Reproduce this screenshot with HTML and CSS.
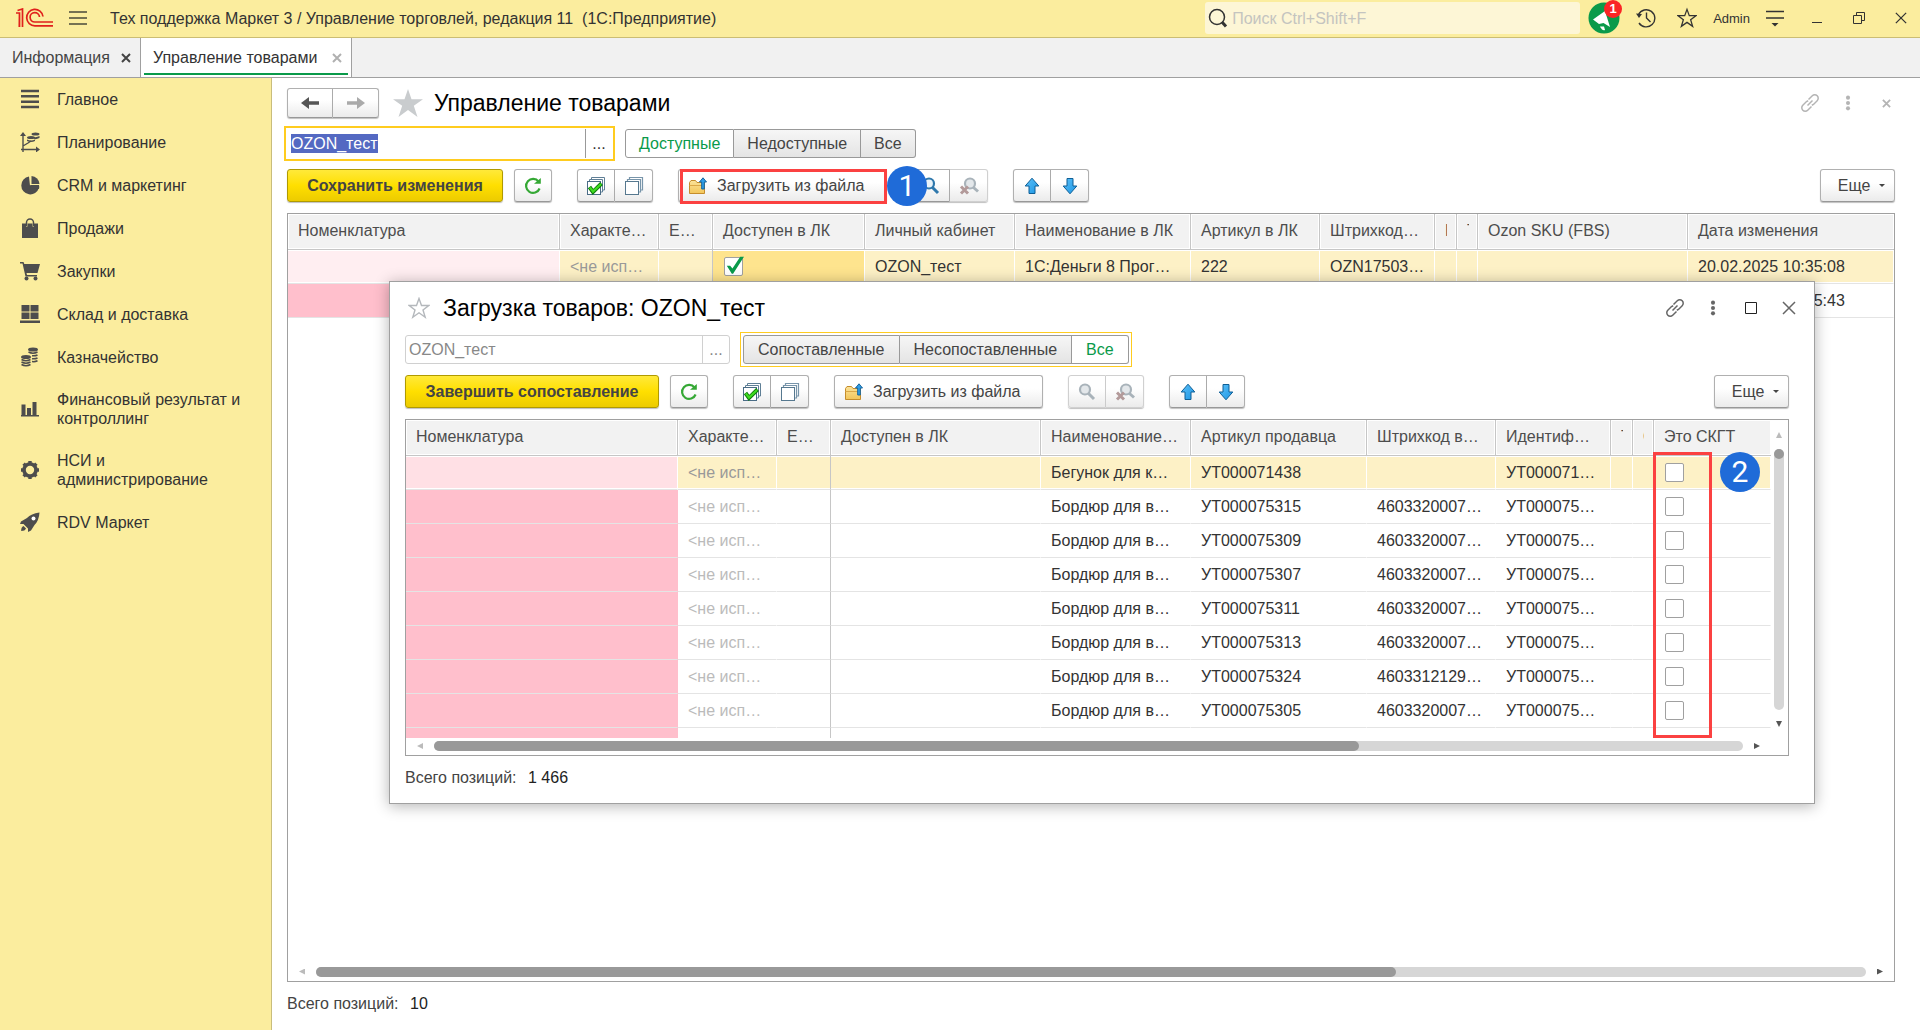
FILE: index.html
```html
<!DOCTYPE html>
<html lang="ru">
<head>
<meta charset="utf-8">
<title>Управление товарами</title>
<link rel="stylesheet" href="styles.css">
</head>
<body>
<svg class="sprite" aria-hidden="true">
  <defs>
    <linearGradient id="blue" x1="0" y1="0" x2="1" y2="1"><stop offset="0" stop-color="#5cc0f8"/><stop offset="1" stop-color="#1c96e4"/></linearGradient>
    <linearGradient id="folder" x1="0" y1="0" x2="0" y2="1"><stop offset="0" stop-color="#fbe39a"/><stop offset="1" stop-color="#f3c65a"/></linearGradient>
  </defs>
  <symbol id="i-refresh" viewBox="0 0 18 18"><path d="M14.6 4.6A7 7 0 1 0 15.6 11.5" fill="none" stroke="#35a835" stroke-width="2.2"/><path d="M10 6.8h6.800V1z" fill="#35a835"/></symbol>
  <symbol id="i-checkall" viewBox="0 0 20 20"><path d="M5.500 4V1.500h13V14H17M3.500 6V3.500h13V16H15" fill="#fff" stroke="#5f7f96"/><rect x="1.500" y="5.500" width="13" height="13" fill="#fff" stroke="#4a6c86"/><path d="M3.500 11l3.500 5 8.500-8.500" fill="none" stroke="#0d7a0d" stroke-width="4"/><path d="M3.800 11.300L7 15.500l8-7.500" fill="none" stroke="#3fdc1f" stroke-width="2.200"/></symbol>
  <symbol id="i-uncheckall" viewBox="0 0 20 20"><path d="M5.500 4V1.500h13V14H17M3.500 6V3.500h13V16H15" fill="#fff" stroke="#7895aa" stroke-width="1.200"/><rect x="1.500" y="5.500" width="13" height="13" fill="#fff" stroke="#56788f"/></symbol>
  <symbol id="i-folder" viewBox="0 0 18 18"><path d="M.5 16.500V5.500L2 3.500h4.500L8 5.500h7.500v11z" fill="url(#folder)" stroke="#c58d2c"/><path d="M.5 8.500h15" stroke="#dba848"/><path d="M14 .8l3.500 4.200h-2.200v7h-2.600V5h-2.200z" fill="#2f9ee8" stroke="#17649c"/></symbol>
  <symbol id="i-find" viewBox="0 0 18 18"><circle cx="7" cy="6.500" r="5" fill="#e9f3fa" stroke="#2f78ac" stroke-width="2.200"/><path d="M10.500 10.500l5.500 5.500" stroke="#2f78ac" stroke-width="3"/></symbol>
  <symbol id="i-findoff" viewBox="0 0 18 18"><circle cx="7" cy="6.500" r="5" fill="#e3e7ea" stroke="#a9b3ba" stroke-width="2.200"/><path d="M10.500 10.500l5.500 5.500" stroke="#a9b3ba" stroke-width="3"/></symbol>
  <symbol id="i-findclear" viewBox="0 0 20 18"><circle cx="11" cy="6.500" r="5" fill="#e3e7ea" stroke="#a9b3ba" stroke-width="2.200"/><path d="M14.500 10.500l4.500 4" stroke="#a9b3ba" stroke-width="3"/><path d="M2 9.500l7 7M9 9.500l-7 7" stroke="#b39a9a" stroke-width="3"/></symbol>
  <symbol id="i-up" viewBox="0 0 16 18"><path d="M8 1.200L14.800 9H11v7.500H5V9H1.200z" fill="url(#blue)" stroke="#0f5f96" stroke-linejoin="round"/></symbol>
  <symbol id="i-down" viewBox="0 0 16 18"><path d="M8 16.800L14.800 9H11V1.500H5V9H1.200z" fill="url(#blue)" stroke="#0f5f96" stroke-linejoin="round"/></symbol>
  <symbol id="i-star" viewBox="0 0 22 22"><path d="M11 1.500l2.500 7h7.300l-5.800 4.400 2.200 7.300L11 15.800l-6.200 4.400L7 12.900 1.200 8.500h7.300z" fill="none" stroke="currentColor" stroke-width="1.400"/></symbol>
  <symbol id="i-link" viewBox="0 0 20 20"><path d="M8.500 6.500l3.800-3.700a3.400 3.400 0 0 1 4.900 4.900l-3.700 3.800-1.700.8M11.500 13.500l-3.800 3.700a3.400 3.400 0 0 1-4.900-4.900l3.700-3.800 1.700-.8M7.500 12.500l5-5" fill="none" stroke="currentColor" stroke-width="1.500"/></symbol>
  <symbol id="i-dots" viewBox="0 0 6 18"><circle cx="3" cy="3" r="2.300" fill="currentColor"/><circle cx="3" cy="9" r="2.300" fill="currentColor"/><circle cx="3" cy="15" r="2.300" fill="currentColor"/></symbol>
  <symbol id="i-x" viewBox="0 0 14 14"><path d="M1 1l12 12M13 1L1 13" fill="none" stroke="currentColor" stroke-width="1.500"/></symbol>
  <symbol id="i-xs" viewBox="0 0 10 10"><path d="M1 1l8 8M9 1L1 9" fill="none" stroke="currentColor" stroke-width="2"/></symbol>
</svg>

<header class="topbar">
  <svg class="logo" viewBox="0 0 38 20" role="img" aria-label="1С"><g fill="none" stroke="#e0201c" stroke-width="1.700"><path d="M0 5h3.500V19M1.500 2.500L6.500 1V19M3.500 5l-.2 14"/><path d="M27 8.500A8.200 8.200 0 1 0 19 17.800H37"/><path d="M23.500 9A4.700 4.700 0 1 0 19 14H37"/></g></svg>
  <button class="bare" aria-label="Меню"><svg width="18" height="16" viewBox="0 0 18 16"><path d="M0 2h18M0 8h18M0 14h18" stroke="#4a4a3a" stroke-width="1.500"/></svg></button>
  <h1 class="apptitle">Тех поддержка Маркет 3 / Управление торговлей, редакция 11&nbsp; (1С:Предприятие)</h1>
  <label class="search">
    <svg width="20" height="20" viewBox="0 0 20 20"><circle cx="9" cy="9" r="7.500" fill="none" stroke="#333" stroke-width="1.500"/><path d="M14 14l4 4.500" stroke="#333" stroke-width="3"/></svg>
    <input type="search" placeholder="Поиск Ctrl+Shift+F" aria-label="Поиск">
  </label>
  <button class="bare notify" aria-label="Уведомления"><svg width="32" height="32" viewBox="0 0 32 32"><circle cx="16" cy="16" r="15.500" fill="#0a9a4a"/><path d="M5 17.500L17 9l5 16-6.500-4-4.500 1z" fill="#fff"/><path d="M12 24.500q2 4.500 5 3.500l-1-3.500z" fill="#fff"/></svg><span class="badge">1</span></button>
  <button class="bare" aria-label="История"><svg width="20" height="20" viewBox="0 0 20 20"><path d="M2.500 6.500A8.600 8.600 0 1 1 3 15M10.500 4.500V10l4 4" fill="none" stroke="#333" stroke-width="1.400"/><path d="M0 5.500l6 .5-3 4z" fill="#333"/></svg></button>
  <button class="bare" aria-label="Избранное"><svg width="20" height="22"><use href="#i-star"/></svg></button>
  <a class="user" href="#">Admin</a>
  <button class="bare" aria-label="Сервис"><svg width="18" height="18" viewBox="0 0 18 18"><path d="M0 2.500h18M0 9h18" stroke="#333" stroke-width="1.400"/><path d="M5.500 14h7L9 17.500z" fill="#333"/></svg></button>
  <div class="winctl">
    <button class="bare" aria-label="Свернуть"><svg width="12" height="14" viewBox="0 0 12 14"><path d="M1 11.500h10" stroke="#333"/></svg></button>
    <button class="bare" aria-label="Восстановить"><svg width="12" height="12" viewBox="0 0 12 12"><path d="M.5 3.500h8v8h-8zM3.500 3.500v-3h8v8h-3" fill="none" stroke="#333"/></svg></button>
    <button class="bare" aria-label="Закрыть"><svg width="12" height="12"><use href="#i-x"/></svg></button>
  </div>
</header>

<nav class="tabs" aria-label="Открытые окна">
  <div class="tab"><a href="#">Информация</a><button class="bare" aria-label="Закрыть вкладку"><svg width="10" height="10"><use href="#i-xs"/></svg></button></div>
  <div class="tab tab-active"><a href="#">Управление товарами</a><button class="bare" aria-label="Закрыть вкладку"><svg width="10" height="10"><use href="#i-xs"/></svg></button></div>
</nav>

<div class="workspace">
  <nav class="sidebar" aria-label="Разделы">
    <a href="#"><svg viewBox="0 0 20 20"><path d="M1 2h18M1 7.300h18M1 12.700h18M1 18h18" stroke="#4d4d4d" stroke-width="2.600"/></svg>Главное</a>
    <a href="#"><svg viewBox="0 0 20 20"><g stroke="#4d4d4d" fill="none" stroke-width="1.400"><path d="M3 20V3M1 17.500h16M3 14l5-3 3-2"/></g><path d="M0 4l3-4 3 4zM16 14.500l4 3-4 3z" fill="#4d4d4d"/><g fill="#4d4d4d"><ellipse cx="11" cy="5.500" rx="4" ry="1.600"/><ellipse cx="15.500" cy="2" rx="4" ry="1.600"/><path d="M7 7.500q4 2 8 0v1.500q-4 2-8 0zM12 4.500q4 1.500 7.500-.5V6q-3 1.500-5 1z"/></g></svg>Планирование</a>
    <a href="#"><svg viewBox="0 0 20 20"><path d="M9 1.500A9 9 0 1 0 18.900 13L10 10.800z" fill="#4d4d4d"/><path d="M11.500 1A8.500 8.500 0 0 1 19.500 9h-8z" fill="#4d4d4d"/><path d="M10 10h9q.5 2 0 4l-8-1z" fill="#4d4d4d"/></svg>CRM и маркетинг</a>
    <a href="#"><svg viewBox="0 0 20 20"><path d="M2 5.500h4v3h1.500v-3h5v3H14v-3h4V20H2z" fill="#4d4d4d"/><path d="M6.500 8V4.500a3.500 3.500 0 0 1 7 0V8" fill="none" stroke="#4d4d4d" stroke-width="1.500"/></svg>Продажи</a>
    <a href="#"><svg viewBox="0 0 20 20"><path d="M0 1h3.500l.8 2H20l-2.500 9H6.500l.5 2h10v1.500H5.500L2.500 2.500H0z" fill="#4d4d4d"/><circle cx="6.500" cy="17.500" r="2" fill="#4d4d4d"/><circle cx="15.500" cy="17.500" r="2" fill="#4d4d4d"/></svg>Закупки</a>
    <a href="#"><svg viewBox="0 0 20 20"><path d="M1.500 1H9.500v6.500h-8zM10.500 1h8v6.500h-8zM1.500 8.500h8V15h-8zM10.500 8.500h8V15h-8zM0 16.500h20V19H0z" fill="#4d4d4d"/></svg>Склад и доставка</a>
    <a href="#"><svg viewBox="0 0 20 20"><g fill="#4d4d4d"><ellipse cx="13" cy="2.500" rx="5" ry="2"/><ellipse cx="6" cy="10" rx="5" ry="2"/></g><g fill="none" stroke="#4d4d4d" stroke-width="1.500"><path d="M8.500 5q4.500 2.500 9 0M12 8.700q3 .5 5.500-.7M12 11.700q3 .5 5.500-.7M12 14.500q3 .5 5.500-.7M1.500 12.500q4.500 2.500 9 0M1.500 15q4.500 2.500 9 0M1.500 17.500q4.500 2.500 9 0"/></g></svg>Казначейство</a>
    <a href="#"><svg viewBox="0 0 20 20"><path d="M1.500 5.500H5.500V16H7V9h4v7h1.500V3h4v13H19v1.500H1V16h.5z" fill="#4d4d4d"/></svg>Финансовый результат и контроллинг</a>
    <a href="#"><svg viewBox="0 0 20 20"><circle cx="10" cy="10" r="6" fill="none" stroke="#4d4d4d" stroke-width="3.600"/><path d="M10 1v3M10 16v3M1 10h3M16 10h3M3.600 3.600l2 2M14.400 14.400l2 2M3.600 16.400l2-2M14.400 5.600l2-2" stroke="#4d4d4d" stroke-width="3.400"/></svg><span>НСИ и<br>администрирование</span></a>
    <a href="#"><svg viewBox="0 0 20 20"><path d="M19.500.5Q11 1.500 7 6L1 9.500 0 12h3.500L8 16.500V20l3-1.500L14.500 13q4.500-4.500 5-12.500z" fill="#4d4d4d"/><circle cx="13.500" cy="6.500" r="2" fill="#fff"/><path d="M3.500 14Q1 15 1.200 19 5 19 6 16.500z" fill="#4d4d4d"/></svg>RDV Маркет</a>
  </nav>

  <main class="form page">
    <div class="titlerow">
      <div class="group nav"><button class="btn" aria-label="Назад"><svg width="18" height="12" viewBox="0 0 18 12"><path d="M0 6l8-6v4.300h10v3.400H8V12z" fill="#555"/></svg></button><button class="btn" aria-label="Вперед"><svg width="18" height="12" viewBox="0 0 18 12"><path d="M18 6l-8-6v4.300H0v3.400h10V12z" fill="#aaa"/></svg></button></div>
      <button class="bare fav" aria-label="В избранное"><svg width="30" height="28" viewBox="0 0 30 28"><path d="M15 0l3.500 10.300H30l-9.200 6.500L24.500 28 15 21 5.500 28l3.700-11.200L0 10.300h11.500z" fill="#c9ccce"/></svg></button>
      <h2>Управление товарами</h2>
      <div class="formctl muted">
        <button class="bare" aria-label="Ссылка"><svg width="20" height="20"><use href="#i-link"/></svg></button>
        <button class="bare" aria-label="Действия"><svg width="6" height="16"><use href="#i-dots"/></svg></button>
        <button class="bare" aria-label="Закрыть форму"><svg width="9" height="9"><use href="#i-xs"/></svg></button>
      </div>
    </div>
    <div class="filterrow">
      <div class="field field-focus"><input type="text" value="OZON_тест" id="account" aria-label="Личный кабинет"><button aria-label="Выбрать">...</button></div>
      <div class="group toggle"><button class="btn on">Доступные</button><button class="btn">Недоступные</button><button class="btn">Все</button></div>
    </div>
    <div class="cmdrow">
      <button class="btn primary">Сохранить изменения</button>
      <button class="btn icon refresh" aria-label="Обновить"><svg width="18" height="18"><use href="#i-refresh"/></svg></button>
      <div class="group"><button class="btn icon" aria-label="Отметить все"><svg width="20" height="20"><use href="#i-checkall"/></svg></button><button class="btn icon" aria-label="Снять отметки"><svg width="20" height="20"><use href="#i-uncheckall"/></svg></button></div>
      <div class="callout">
        <button class="btn load"><svg width="18" height="18"><use href="#i-folder"/></svg>Загрузить из файла</button>
        <span class="frame frame-load"></span><span class="step step-one">1</span>
      </div>
      <div class="group"><button class="btn icon" aria-label="Найти"><svg width="18" height="18"><use href="#i-find"/></svg></button><button class="btn icon dim" aria-label="Отменить поиск"><svg width="20" height="18"><use href="#i-findclear"/></svg></button></div>
      <div class="group"><button class="btn icon" aria-label="Вверх"><svg width="16" height="18"><use href="#i-up"/></svg></button><button class="btn icon" aria-label="Вниз"><svg width="16" height="18"><use href="#i-down"/></svg></button></div>
      <button class="btn more">Еще<span class="caret"></span></button>
    </div>
    <div class="grid grid-page">
      <div class="rows">
        <table>
          <colgroup><col class="w272"><col class="w99"><col class="w54"><col class="w152"><col class="w150"><col class="w176"><col class="w129"><col class="w115"><col class="w22"><col class="w21"><col class="w210"><col></colgroup>
          <thead><tr><th>Номенклатура</th><th>Характе…</th><th>Е…</th><th>Доступен в ЛК</th><th>Личный кабинет</th><th>Наименование в ЛК</th><th>Артикул в ЛК</th><th>Штрихкод…</th><th><span class="sliver">Н</span></th><th><span class="sliver">Т</span></th><th>Ozon SKU (FBS)</th><th>Дата изменения</th></tr></thead>
          <tbody>
            <tr class="sel"><td class="pink-light"></td><td class="na">&lt;не исп…</td><td class="fixed"></td><td class="cur"><input type="checkbox" checked aria-label="Доступен в ЛК"></td><td>OZON_тест</td><td>1С:Деньги 8 Прог…</td><td>222</td><td>OZN17503…</td><td></td><td></td><td></td><td>20.02.2025 10:35:08</td></tr>
            <tr><td class="pink"></td><td></td><td class="fixed"></td><td></td><td></td><td></td><td></td><td></td><td></td><td></td><td></td><td>20.02.2025 10:55:43</td></tr>
          </tbody>
        </table>
      </div>
      <div class="hscroll"><span class="arr left off"></span><div class="track"><div class="thumb" style="width:69.7%"></div></div><span class="arr right"></span></div>
    </div>
    <p class="total">Всего позиций: <b>10</b></p>

    <section class="form dialog" role="dialog" aria-label="Загрузка товаров">
      <div class="titlerow">
        <button class="bare fav" aria-label="В избранное"><svg width="22" height="22"><use href="#i-star"/></svg></button>
        <h2>Загрузка товаров: OZON_тест</h2>
        <div class="formctl">
          <button class="bare" aria-label="Ссылка"><svg width="20" height="20"><use href="#i-link"/></svg></button>
          <button class="bare" aria-label="Действия"><svg width="6" height="16"><use href="#i-dots"/></svg></button>
          <button class="bare" aria-label="Развернуть"><svg width="12" height="12" viewBox="0 0 12 12"><path d="M.5 .5h11v11H.5z" fill="none" stroke="#222"/></svg></button>
          <button class="bare" aria-label="Закрыть"><svg width="14" height="14"><use href="#i-x"/></svg></button>
        </div>
      </div>
      <div class="filterrow">
        <div class="field field-off"><input type="text" value="OZON_тест" disabled aria-label="Личный кабинет"><button disabled aria-label="Выбрать">...</button></div>
        <div class="group toggle toggle-focus"><button class="btn">Сопоставленные</button><button class="btn">Несопоставленные</button><button class="btn on">Все</button></div>
      </div>
      <div class="cmdrow">
        <button class="btn primary wide">Завершить сопоставление</button>
        <button class="btn icon refresh" aria-label="Обновить"><svg width="18" height="18"><use href="#i-refresh"/></svg></button>
        <div class="group"><button class="btn icon" aria-label="Отметить все"><svg width="20" height="20"><use href="#i-checkall"/></svg></button><button class="btn icon" aria-label="Снять отметки"><svg width="20" height="20"><use href="#i-uncheckall"/></svg></button></div>
        <button class="btn load"><svg width="18" height="18"><use href="#i-folder"/></svg>Загрузить из файла</button>
        <div class="group"><button class="btn icon dim" aria-label="Найти"><svg width="18" height="18"><use href="#i-findoff"/></svg></button><button class="btn icon dim" aria-label="Отменить поиск"><svg width="20" height="18"><use href="#i-findclear"/></svg></button></div>
        <div class="group"><button class="btn icon" aria-label="Вверх"><svg width="16" height="18"><use href="#i-up"/></svg></button><button class="btn icon" aria-label="Вниз"><svg width="16" height="18"><use href="#i-down"/></svg></button></div>
        <button class="btn more">Еще<span class="caret"></span></button>
      </div>
      <div class="grid grid-dialog">
        <div class="rows">
          <table>
            <colgroup><col class="w272"><col class="w99"><col class="w54"><col class="w210"><col class="w150"><col class="w176"><col class="w129"><col class="w115"><col class="w22"><col class="w21"><col></colgroup>
            <thead><tr><th>Номенклатура</th><th>Характе…</th><th>Е…</th><th>Доступен в ЛК</th><th>Наименование…</th><th>Артикул продавца</th><th>Штрихкод в…</th><th>Идентиф…</th><th><span class="sliver">Т</span></th><th><span class="sliver thin">О</span></th><th>Это СКГТ</th></tr></thead>
            <tbody>
              <tr class="sel"><td class="pink-mid"></td><td class="na">&lt;не исп…</td><td class="fixed"></td><td></td><td>Бегунок для к…</td><td>УТ000071438</td><td></td><td>УТ000071…</td><td></td><td></td><td><input type="checkbox" aria-label="Это СКГТ"></td></tr>
              <tr><td class="pink"></td><td class="na">&lt;не исп…</td><td class="fixed"></td><td></td><td>Бордюр для в…</td><td>УТ000075315</td><td>4603320007…</td><td>УТ000075…</td><td></td><td></td><td><input type="checkbox" aria-label="Это СКГТ"></td></tr>
              <tr><td class="pink"></td><td class="na">&lt;не исп…</td><td class="fixed"></td><td></td><td>Бордюр для в…</td><td>УТ000075309</td><td>4603320007…</td><td>УТ000075…</td><td></td><td></td><td><input type="checkbox" aria-label="Это СКГТ"></td></tr>
              <tr><td class="pink"></td><td class="na">&lt;не исп…</td><td class="fixed"></td><td></td><td>Бордюр для в…</td><td>УТ000075307</td><td>4603320007…</td><td>УТ000075…</td><td></td><td></td><td><input type="checkbox" aria-label="Это СКГТ"></td></tr>
              <tr><td class="pink"></td><td class="na">&lt;не исп…</td><td class="fixed"></td><td></td><td>Бордюр для в…</td><td>УТ000075311</td><td>4603320007…</td><td>УТ000075…</td><td></td><td></td><td><input type="checkbox" aria-label="Это СКГТ"></td></tr>
              <tr><td class="pink"></td><td class="na">&lt;не исп…</td><td class="fixed"></td><td></td><td>Бордюр для в…</td><td>УТ000075313</td><td>4603320007…</td><td>УТ000075…</td><td></td><td></td><td><input type="checkbox" aria-label="Это СКГТ"></td></tr>
              <tr><td class="pink"></td><td class="na">&lt;не исп…</td><td class="fixed"></td><td></td><td>Бордюр для в…</td><td>УТ000075324</td><td>4603312129…</td><td>УТ000075…</td><td></td><td></td><td><input type="checkbox" aria-label="Это СКГТ"></td></tr>
              <tr><td class="pink"></td><td class="na">&lt;не исп…</td><td class="fixed"></td><td></td><td>Бордюр для в…</td><td>УТ000075305</td><td>4603320007…</td><td>УТ000075…</td><td></td><td></td><td><input type="checkbox" aria-label="Это СКГТ"></td></tr>
              <tr><td class="pink"></td><td></td><td class="fixed"></td><td></td><td></td><td></td><td></td><td></td><td></td><td></td><td></td></tr>
            </tbody>
          </table>
        </div>
        <div class="vscroll"><span class="arr up off"></span><div class="track"><div class="thumb"></div></div><span class="arr down"></span></div>
        <div class="hscroll"><span class="arr left off"></span><div class="track"><div class="thumb" style="width:70.7%"></div></div><span class="arr right"></span></div>
        <span class="frame frame-column"></span><span class="step step-two">2</span>
      </div>
      <p class="total">Всего позиций: <b>1 466</b></p>
    </section>
  </main>
</div>
<script src="app.js"></script>
</body>
</html>
```
FILE: styles.css
```css
* { box-sizing: border-box; }
html, body { height: 100%; }
body {
  margin: 0;
  display: flex;
  flex-direction: column;
  min-height: 100vh;
  font: 16px/19px "Liberation Sans", Arial, sans-serif;
  color: #333;
  background: #fff;
}
button, input { font: inherit; color: inherit; }
a { color: inherit; text-decoration: none; }
h1, h2, p { margin: 0; font-weight: 400; }
svg { display: block; flex: none; }
.sprite { position: absolute; width: 0; height: 0; }
.bare { display: flex; align-items: center; justify-content: center; padding: 0; border: 0; background: none; }

/* top bar */
.topbar {
  display: flex;
  align-items: center;
  flex: none;
  height: 38px;
  padding: 0 13px 1px 16px;
  background: #fbed9e;
  border-bottom: 1px solid #cbbd74;
}
.logo { width: 38px; height: 20px; margin-right: 15px; }
.apptitle { margin-left: 23px; font-size: 16px; flex: 1; white-space: nowrap; }
.search {
  display: flex;
  align-items: center;
  gap: 4px;
  width: 375px;
  height: 32px;
  padding-left: 3px;
  margin-right: 8px;
  border-radius: 3px;
  background: #fdf6d6;
}
.search input { flex: 1; min-width: 0; padding: 0; border: 0; background: none; outline: 0; }
.search input::placeholder { color: #c4c4c0; opacity: 1; }
.notify { position: relative; margin-right: 16px; }
.badge {
  position: absolute;
  top: -2px;
  right: -2px;
  width: 18px;
  height: 18px;
  border-radius: 50%;
  background: #fa2525;
  color: #fff;
  font: bold 13px/18px "Liberation Sans", Arial, sans-serif;
}
.notify ~ .bare { margin-right: 21px; }
.user { margin: 0 16px 0 -5px; font-size: 13px; }
.winctl { display: flex; align-items: center; gap: 30px; margin-left: 6px; }

/* open window tabs */
.tabs { display: flex; flex: none; height: 40px; background: #f1f1f1; border-bottom: 1px solid #a0a0a0; }
.tab { display: flex; align-items: center; justify-content: space-between; width: 141px; padding: 0 9px 0 12px; border-right: 1px solid #a0a0a0; color: #444; }
.tab-active { position: relative; width: 211px; background: #fff; color: #333; }
.tab-active::after { content: ""; position: absolute; left: 3px; right: 3px; bottom: 2px; height: 2px; background: #0a9a4a; }
.tab-active .bare { color: #b0b0b0; }

/* sections */
.workspace { display: flex; flex: 1; min-height: 0; }
.sidebar { flex: none; width: 272px; background: #fbed9e; border-right: 1px solid #c9bd7c; }
.sidebar a { display: flex; align-items: center; gap: 17px; min-height: 43px; padding: 11px 12px 12px 20px; }
.sidebar svg { width: 20px; height: 20px; margin: -1px 0; }

/* forms */
.form { display: flex; flex-direction: column; gap: 11px; }
.page { position: relative; flex: 1; min-width: 0; padding: 10px 25px 15px 15px; }
.titlerow, .filterrow, .cmdrow { display: flex; align-items: center; }
.titlerow { height: 30px; }
.titlerow h2 { flex: 1; color: #000; font-size: 23px; line-height: 26px; }
.page .fav { margin: 0 11px 0 14px; }
.formctl { display: flex; align-items: center; margin-right: -19px; color: #666; }
.formctl .bare { width: 38px; }
.formctl.muted { color: #b4b4b4; margin-right: -10px; }
.filterrow { gap: 13px; height: 29px; }

.btn {
  display: flex;
  align-items: center;
  justify-content: center;
  height: 33px;
  padding: 0;
  border: 1px solid #b0b0b0;
  border-bottom-color: #989898;
  border-radius: 3px;
  background: linear-gradient(#fff 40%, #ebebeb);
  box-shadow: 0 1px 1px rgba(0, 0, 0, .25);
  color: #444;
  white-space: nowrap;
}
.icon { width: 38px; }
.dim { border-color: #d0d0d0; }
.group { display: flex; }
.group .btn { border-radius: 0; }
.group .btn:first-child { border-radius: 3px 0 0 3px; }
.group .btn:last-child { border-radius: 0 3px 3px 0; }
.group .btn + .btn { border-left: 0; }
.nav .btn { width: 46px; height: 30px; }
.toggle .btn { height: 29px; padding: 0 13px; border-color: #999; box-shadow: none; background: linear-gradient(#f6f6f6, #e4e4e4); }
.toggle .btn.on { color: #0a9a4a; background: #fff; }
.toggle-focus { outline: 1px solid #ffcc1f; outline-offset: 2px; }
.toggle-focus .btn { padding: 0 14px; }
.primary { width: 216px; border-color: #b09a00; background: linear-gradient(#ffe93a, #ffdf00 50%, #eccb00); font-weight: 700; }
.wide { width: 254px; }
.refresh { margin: 0 25px 0 11px; }
.load { width: 209px; gap: 10px; justify-content: flex-start; padding-left: 10px; }
.cmdrow > .group, .cmdrow > .load, .callout { margin-right: 25px; }
.more { margin-left: auto; width: 75px; gap: 9px; padding-left: 8px; }
.caret { border: 3px solid transparent; border-top-color: #444; border-bottom: 0; }

.field { display: flex; width: 325px; height: 29px; background: #fff; }
.field input { flex: 1; min-width: 0; padding: 0 4px; border: 0; outline: 0; background: none; }
.field button { width: 27px; padding: 0; border: 0; border-left: 1px solid #999; background: none; }
.field-focus { outline: 2px solid #ffcc1f; outline-offset: 1px; }
.field-focus input::selection { background: #5469c2; color: #fff; }
.field-off { border: 1px solid #d0d0d0; border-radius: 3px; color: #888; }
.field-off input { padding: 0 3px; }
.field-off button { border-color: #d0d0d0; }

/* data grids */
.grid { display: grid; border: 1px solid #a0a0a0; }
.grid-page { flex: 1; min-height: 0; grid-template-rows: 1fr 19px; }
.grid-dialog { position: relative; grid-template: 318px 17px / 1fr 17px; }
.rows { overflow: hidden; min-width: 0; }
table { width: 100%; table-layout: fixed; border-collapse: separate; border-spacing: 0; }
th, td { padding: 0 0 0 10px; overflow: hidden; white-space: nowrap; text-align: left; font-weight: 400; }
th { height: 36px; border-right: 1px solid #c6c6c6; border-bottom: 1px solid #c6c6c6; background: #f2f2f2; box-shadow: inset 0 0 0 1px #fff; color: #4d4d4d; padding-bottom: 3px; }
th:last-child { border-right: 0; }
.sliver { display: block; width: 2px; overflow: hidden; }
.thin { width: 1px; }
td { height: 34px; border-right: 1px solid transparent; border-bottom: 1px solid #e4e4e4; }
.sel td { background: #fdf1c6; border-right-color: #fff; box-shadow: inset 0 1px #fff, inset 0 -1px #fff; }
.sel td.fixed, td.fixed { border-right-color: #c6c6c6; }
td.pink { background: #ffbfcc; }
.sel td.pink-light { background: #ffeef1; }
.sel td.pink-mid { background: #ffe0e5; }
.sel td.cur { background: #fee48e; }
td.na { color: #bbb; }
.sel td.na { color: #999; }
.w272 { width: 272px; } .w210 { width: 210px; } .w176 { width: 176px; } .w152 { width: 152px; } .w150 { width: 150px; }
.w129 { width: 129px; } .w115 { width: 115px; } .w99 { width: 99px; } .w54 { width: 54px; } .w22 { width: 22px; } .w21 { width: 21px; }
td input {
  display: block;
  position: relative;
  appearance: none;
  width: 19px;
  height: 19px;
  margin: 0 0 0 1px;
  border: 1px solid #a0a0a0;
  border-radius: 2px;
  background: #fff;
}
td input:checked::before {
  content: "";
  position: absolute;
  inset: -2px;
  background: #0a9a4a;
  clip-path: polygon(18% 46%, 34% 46%, 45% 60%, 82% 3%, 100% 3%, 48% 84%, 42% 84%);
}

/* scroll bars */
.hscroll { display: flex; align-items: center; gap: 11px; padding: 0 11px; }
.grid-dialog .hscroll { grid-column: 1 / 3; padding: 0 28px 1px 11px; }
.track { flex: 1; height: 10px; border-radius: 5px; background: #d6d6d6; }
.thumb { height: 10px; border-radius: 5px; background: #999; }
.vscroll { display: flex; flex-direction: column; align-items: center; gap: 11px; padding: 12px 1px 11px 0; }
.vscroll .track { width: 10px; }
.arr { width: 6px; height: 6px; background: #555; }
.off { background: #bbb; }
.left { clip-path: polygon(0 50%, 100% 0, 100% 100%); }
.right { clip-path: polygon(100% 50%, 0 0, 0 100%); }
.up { clip-path: polygon(50% 0, 100% 100%, 0 100%); }
.down { clip-path: polygon(50% 100%, 100% 0, 0 0); }

.total { line-height: 22px; color: #444; }
.total b { margin-left: 7px; font-weight: 400; color: #222; }

/* dialog over the page */
.dialog {
  position: absolute;
  top: 203px;
  left: 117px;
  right: 105px;
  padding: 12px 25px 14px 15px;
  border: 1px solid #a0a0a0;
  background: #fff;
  box-shadow: 0 2px 14px rgba(0, 0, 0, .3);
}
.dialog .titlerow { padding-bottom: 3px; }
.dialog .fav { margin: 0 13px 0 3px; color: #b4b8bc; }

/* step callouts */
.callout { position: relative; }
.frame { position: absolute; border: 3px solid #fb4141; pointer-events: none; }
.frame-load { inset: 0 0 -2px 2px; }
.frame-column { top: 32px; bottom: 17px; right: 76px; width: 59px; }
.step {
  position: absolute;
  width: 40px;
  height: 40px;
  border-radius: 50%;
  background: #1f6bd8;
  color: #fff;
  font: 30px/40px Roboto, "Open Sans", sans-serif;
  text-align: center;
}
.step-one { left: 209px; top: -3px; }
.step-two { top: 32px; right: 28px; }
```
FILE: app.js
```js
const account = document.getElementById("account");
account.focus();
account.select();
```
